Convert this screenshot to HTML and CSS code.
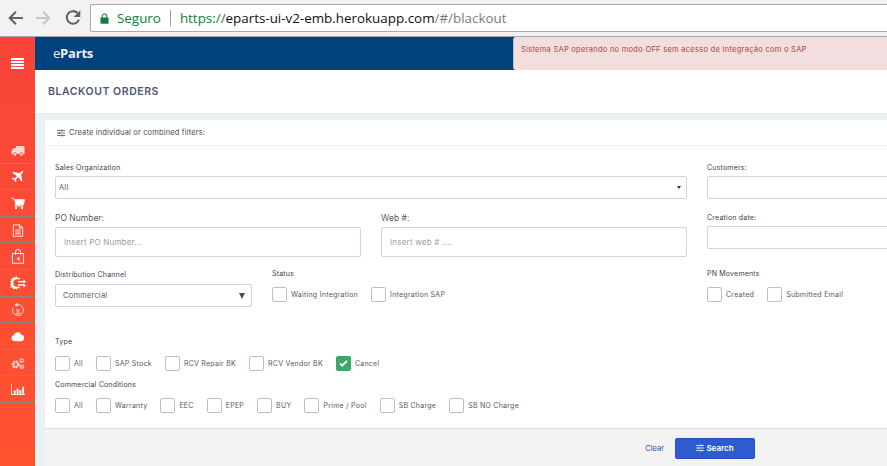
FILE: index.html
```html
<!DOCTYPE html>
<html lang="en">
	<head>
		<meta charset="UTF-8" />
		<meta name="viewport" content="width=device-width, initial-scale=1.0" />
		<title>Blackout Orders</title>
		<link rel="stylesheet" href="styles.css">
	</head>
	<body>
		<div class="browser-bar">
			<svg class="nav-icon" viewBox="0 0 16 16"><path d="M15 8H3.500M8.800 2.500L3.300 8l5.500 5.500" fill="none" stroke="#5f6368" stroke-width="1.800"/></svg>
			<svg class="nav-icon" viewBox="0 0 16 16"><path d="M1 8h11.500M7.200 2.500L12.700 8l-5.500 5.500" fill="none" stroke="#c4c6c9" stroke-width="1.800"/></svg>
			<svg class="nav-icon" viewBox="0 0 16 16"><path d="M13.300 9.500A5.600 5.600 0 1 1 12 3.500" fill="none" stroke="#5f6368" stroke-width="1.800"/><path d="M14.500 1v6h-6z" fill="#5f6368"/></svg>
			<div class="url-box">
				<svg class="lock" viewBox="0 0 10 12"><path d="M2.500 5V3.500a2.500 2.500 0 0 1 5 0V5" fill="none" stroke="#0b8043" stroke-width="1.200"/><rect x="0.500" y="4.800" width="9" height="7" fill="#0b8043"/></svg>
				<span class="secure">Seguro</span>
				<span class="url-sep"></span>
				<span class="url"><span class="url-https">https://</span>eparts-ui-v2-emb.herokuapp.com<span class="url-path">/#/blackout</span></span>
			</div>
		</div>

		<div class="app">
			<nav class="sidebar">
				<div class="menu-toggle">
					<svg viewBox="0 0 13 11"><path d="M0 0h13v2H0zM0 3h13v2H0zM0 6h13v2H0zM0 9h13v2H0z" fill="#fff"/></svg>
				</div>
				<div class="side-item"><svg viewBox="0 0 14 12"><path d="M5 1.500h8.500v8H12a1.700 1.700 0 0 0-3.400 0H5.600a1.700 1.700 0 0 0-3.400 0H.5V6L3 3.500h2z" fill="#f7dcd6"/><circle cx="3.900" cy="10" r="1.300" fill="#f7dcd6"/><circle cx="10.300" cy="10" r="1.300" fill="#f7dcd6"/></svg></div>
				<div class="side-item"><svg viewBox="0 0 14 12"><path d="M13 .6c-.8-.6-2-.2-2.800.6L8.600 2.800 2.500 1.300 1.300 2.500l4.800 2.900L3.800 7.700 1.800 7.300l-1 1 2.400 1.300 1.300 2.200 1-1-.4-2 2.300-2.300 2.800 4.600 1.200-1.200-1.400-6 1.500-1.500c.7-.8 1-1.800.5-2.400z" fill="#fff"/></svg></div>
				<div class="side-item"><svg viewBox="0 0 14 12"><path d="M.5.800h2.200l.5 1.500h10.300l-1.200 5H4.500L3.900 8.500h8.400" fill="none" stroke="#fff" stroke-width="1"/><path d="M3.300 2.300h10.200l-1.200 5H4.500z" fill="#fff"/><circle cx="5" cy="10.500" r="1.200" fill="#fff"/><circle cx="11" cy="10.500" r="1.200" fill="#fff"/></svg></div>
				<div class="side-item"><svg viewBox="0 0 12 14"><path d="M1 .8h6.500l3.500 3.500v8.900H1z" fill="none" stroke="#fbe3de" stroke-width="1.100"/><path d="M7.500 1v3.300H11M3 6.500h6M3 8.500h6M3 10.500h6" fill="none" stroke="#fbe3de" stroke-width="1.100"/></svg></div>
				<div class="side-item side-tall"><svg viewBox="0 0 13 15"><path d="M1 4.500h11v9.700H1z" fill="none" stroke="#fbe3de" stroke-width="1.100"/><path d="M4 6V3a2.500 2.500 0 0 1 5 0v3" fill="none" stroke="#fbe3de" stroke-width="1.100"/><path d="M8 7.500L5 9.700l3 2.200z" fill="#fbe3de"/></svg></div>
				<div class="side-item side-wide"><svg viewBox="0 0 16 14"><path d="M6.500 0l1 1.900 1.900-.5.400 1.900H7a3.700 3.700 0 1 0 0 7.400h2.700l-.3 1.700-1.900-.5-1 1.900-1.500-1.400-1.700 1-.6-2-2.100.1.400-2L0 8.600l1.400-1.600L0 5.400l1.500-.9-.4-2 2.100.1.600-2 1.700 1z" fill="#fff"/><path d="M8 5h5.500V3.500L16 5.700l-2.500 1.900V6.300H8zM8 8.200h5.500V7.500L16 9.400l-2.500 2v-1.600H8z" fill="#fff"/></svg></div>
				<div class="side-item side-tall"><svg viewBox="0 0 14 16"><path d="M4 3.600A5.800 5.800 0 1 1 1.700 6.200" fill="none" stroke="#fbe3de" stroke-width="1"/><path d="M6.500.8v4.400L3.300 3z" fill="#fbe3de"/><text x="7" y="12.500" class="dollar">$</text></svg></div>
				<div class="side-item"><svg viewBox="0 0 15 10"><path d="M3.500 10a3.200 3.200 0 0 1-.6-6.300A4.500 4.500 0 0 1 11.300 3a3.600 3.600 0 0 1 .2 7z" fill="#fff"/></svg></div>
				<div class="side-item"><svg viewBox="0 0 15 13"><circle cx="5" cy="7.500" r="2.800" fill="none" stroke="#f7dcd6" stroke-width="2.800" stroke-dasharray="2 .6"/><circle cx="11.700" cy="3.300" r="1.700" fill="none" stroke="#f7dcd6" stroke-width="1.800" stroke-dasharray="1.200 .4"/><circle cx="11.700" cy="10" r="1.700" fill="none" stroke="#f7dcd6" stroke-width="1.800" stroke-dasharray="1.200 .4"/></svg></div>
				<div class="side-item"><svg viewBox="0 0 15 12"><path d="M.5 0v11.300H15" fill="none" stroke="#fff" stroke-width="1"/><path d="M3 7h2v3.500H3zM6 5h2v5.500H6zM9 6.500h2v4H9zM12 3h2v7.500h-2z" fill="#fff"/></svg></div>
			</nav>

			<main class="content">
				<header class="topbar">
					<div class="brand"><span class="brand-e">e</span>Parts</div>
					<div class="alert">Sistema SAP operando no modo OFF sem acesso de Integração com o SAP</div>
				</header>
				<div class="page-title">BLACKOUT ORDERS</div>

				<section class="card">
					<div class="card-head">
						<svg class="sliders" viewBox="0 0 8 8"><path d="M0 1.500h8M0 4h8M0 6.500h8" stroke="#444" stroke-width=".7"/><path d="M5 .5v2M2.500 3v2M5 5.500v2" stroke="#444" stroke-width=".9"/></svg>
						Create individual or combined filters:
					</div>

					<div class="card-body">
						<div class="row row-sales">
							<div class="col-main">
								<label class="field-label">Sales Organization</label>
								<div class="select-box"><span>All</span><span class="caret"></span></div>
							</div>
							<div class="col-side">
								<label class="field-label">Customers:</label>
								<div class="text-box"></div>
							</div>
						</div>

						<div class="row row-po">
							<div class="col-main two-up">
								<div class="half">
									<label class="field-label big">PO Number:</label>
									<div class="text-box tall">Insert PO Number...</div>
								</div>
								<div class="half">
									<label class="field-label big">Web #:</label>
									<div class="text-box tall">Insert web # ....</div>
								</div>
							</div>
							<div class="col-side">
								<label class="field-label">Creation date:</label>
								<div class="text-box"></div>
							</div>
						</div>

						<div class="row row-channel">
							<div class="col-main two-up">
								<div class="channel">
									<label class="field-label channel-label">Distribution Channel</label>
									<div class="select-box channel-select"><span>Commercial</span><span class="triangle"></span></div>
								</div>
								<div class="status">
									<label class="field-label">Status</label>
									<div class="checks checks-status">
										<label class="check"><span class="box"></span>Waiting Integration</label>
										<label class="check"><span class="box"></span>Integration SAP</label>
									</div>
								</div>
							</div>
							<div class="col-side">
								<label class="field-label">PN Movements</label>
								<div class="checks checks-status">
									<label class="check"><span class="box"></span>Created</label>
									<label class="check"><span class="box"></span>Submitted Email</label>
								</div>
							</div>
						</div>

						<div class="group group-type">
							<label class="field-label">Type</label>
							<div class="checks">
								<label class="check"><span class="box"></span>All</label>
								<label class="check"><span class="box"></span>SAP Stock</label>
								<label class="check"><span class="box"></span>RCV Repair BK</label>
								<label class="check"><span class="box"></span>RCV Vendor BK</label>
								<label class="check"><span class="box checked"><svg viewBox="0 0 10 8"><path d="M1 4l2.500 2.500L9 1" fill="none" stroke="#fff" stroke-width="2"/></svg></span>Cancel</label>
							</div>
						</div>

						<div class="group group-conditions">
							<label class="field-label">Commercial Conditions</label>
							<div class="checks">
								<label class="check"><span class="box"></span>All</label>
								<label class="check"><span class="box"></span>Warranty</label>
								<label class="check"><span class="box"></span>EEC</label>
								<label class="check"><span class="box"></span>EPEP</label>
								<label class="check"><span class="box"></span>BUY</label>
								<label class="check"><span class="box"></span>Prime / Pool</label>
								<label class="check"><span class="box"></span>SB Charge</label>
								<label class="check"><span class="box"></span>SB NO Charge</label>
							</div>
						</div>
					</div>

					<div class="card-foot">
						<a class="clear-link">Clear</a>
						<button class="search-btn">
							<svg class="sliders" viewBox="0 0 8 8"><path d="M0 1.500h8M0 4h8M0 6.500h8" stroke="#fff" stroke-width=".7"/><path d="M5 .5v2M2.500 3v2M5 5.500v2" stroke="#fff" stroke-width=".9"/></svg>
							Search
						</button>
					</div>
				</section>
			</main>
		</div>
	</body>
</html>
```

FILE: styles.css
```css
html, body {
	height: 100%;
}
body {
	margin: 0;
	overflow: hidden;
	font-family: Inter, "Liberation Sans", sans-serif;
	color: #3f4047;
	background-color: #ebf0f5;
}

/* browser chrome */
.browser-bar {
	height: 36px;
	display: flex;
	align-items: center;
	padding-left: 6px;
	background-color: #f2f2f2;
	border-bottom: 1px solid #a9a9a9;
}
.nav-icon {
	width: 18px;
	height: 18px;
	margin-right: 11px;
	flex: none;
}
.url-box {
	flex: 1;
	height: 28px;
	box-sizing: border-box;
	margin-left: -3px;
	display: flex;
	align-items: center;
	padding-left: 9px;
	background-color: white;
	border: 1px solid #a9a9a9;
	border-right: none;
	border-radius: 2px 0 0 2px;
	font-family: "Open Sans", sans-serif;
	font-size: 13.400px;
	white-space: nowrap;
}
.lock {
	width: 9px;
	height: 11px;
	margin-right: 8px;
}
.secure {
	color: #0b8043;
}
.url-sep {
	width: 1px;
	height: 16px;
	margin: 0 9px 0 9px;
	background-color: #9e9e9e;
}
.url {
	color: #111;
}
.url-https {
	color: #0b8043;
}
.url-path {
	color: #7b7b7b;
}

/* layout */
.app {
	display: flex;
	height: 429px;
}
.sidebar {
	width: 35px;
	flex: none;
	background: linear-gradient(#f94438, #ff532f);
}
.menu-toggle {
	height: 100px;
	display: flex;
	justify-content: center;
	padding-top: 21px;
	box-sizing: border-box;
}
.menu-toggle svg {
	width: 13px;
	height: 11px;
}
.side-item {
	height: 26.600px;
	box-sizing: border-box;
	display: flex;
	align-items: center;
	justify-content: center;
	padding-top: 1px;
	border-bottom: 1px solid #8c8785;
}
.side-item svg {
	width: 14px;
	height: 13px;
}
.side-tall svg {
	height: 15px;
}
.side-wide svg {
	width: 16px;
	height: 14px;
}
.dollar {
	font-size: 8px;
	font-family: "Liberation Sans", sans-serif;
	fill: #fbe3de;
	text-anchor: middle;
}
.content {
	flex: 1;
	min-width: 0;
	overflow: hidden;
}

/* header */
.topbar {
	height: 33px;
	display: flex;
	background-color: #00417e;
}
.brand {
	width: 478px;
	padding-left: 18px;
	box-sizing: border-box;
	line-height: 33px;
	color: #eaf0f6;
	font-family: "Open Sans", sans-serif;
	font-size: 13px;
	font-weight: 700;
	letter-spacing: -.2px;
}
.brand-e {
	font-weight: 400;
}
.alert {
	flex: 1;
	padding: 8px 7px 0 7px;
	background-color: #f2dede;
	border-left: 1px solid #b9c4cf;
	border-radius: 3px 0 0 3px;
	color: #a94442;
	font-size: 7.500px;
	line-height: 10px;
	letter-spacing: .27px;
	white-space: nowrap;
}
.page-title {
	height: 44px;
	padding-left: 13px;
	line-height: 43px;
	background-color: white;
	border-bottom: 1px solid #e3e8ee;
	box-sizing: border-box;
	color: #4f5670;
	font-size: 10.500px;
	font-weight: 600;
	letter-spacing: .55px;
}

/* filter card */
.card {
	margin: 6px 0 0 10px;
	background-color: white;
}
.card-head {
	height: 25px;
	display: flex;
	align-items: center;
	gap: 4px;
	padding-left: 12px;
	border-bottom: 1px solid #f0f0f2;
	font-size: 7.500px;
	letter-spacing: .15px;
	color: #4a4a4f;
}
.sliders {
	width: 8px;
	height: 8px;
	flex: none;
}
.card-body {
	padding: 17px 0 15px 10px;
}
.row {
	display: flex;
}
.row-po {
	margin-top: 14px;
}
.row-channel {
	margin-top: 12px;
}
.col-main {
	width: 632px;
	flex: none;
}
.col-side {
	margin-left: 20px;
	width: 200px;
	flex: none;
}
.two-up {
	display: flex;
	gap: 20px;
}
.half {
	flex: 1;
}
.channel {
	width: 197px;
	flex: none;
}
.status {
	flex: 1;
}
.field-label {
	display: block;
	height: 10px;
	line-height: 10px;
	margin-bottom: 3px;
	font-size: 7px;
	letter-spacing: .2px;
}
.field-label.big {
	margin-bottom: 4px;
	font-size: 8.500px;
	letter-spacing: 0;
	color: #55585f;
}
.channel-label {
	margin-top: 1px;
	margin-bottom: 4px;
}
.select-box,
.text-box {
	height: 23px;
	box-sizing: border-box;
	display: flex;
	align-items: center;
	background-color: white;
	border: 1px solid #cdd5e2;
	border-radius: 2px;
	font-size: 7.500px;
	letter-spacing: .2px;
}
.select-box {
	justify-content: space-between;
	padding: 0 5px 0 3px;
	color: #55585f;
}
.caret {
	width: 0;
	height: 0;
	border-left: 2.500px solid transparent;
	border-right: 2.500px solid transparent;
	border-top: 3px solid #333;
}
.text-box.tall {
	height: 30px;
	padding-left: 8px;
	color: #9b9ba1;
	font-size: 8px;
}
.channel-select {
	padding: 0 6px 0 7px;
}
.triangle {
	width: 0;
	height: 0;
	border-left: 3px solid transparent;
	border-right: 3px solid transparent;
	border-top: 6px solid #44505f;
}

/* check boxes */
.checks {
	display: flex;
	align-items: center;
	gap: 13px;
}
.checks-status {
	margin-top: 8px;
}
.check {
	display: flex;
	align-items: center;
	gap: 4px;
	font-size: 7px;
	letter-spacing: .26px;
	color: #55585f;
	white-space: nowrap;
}
.box {
	width: 15px;
	height: 15px;
	box-sizing: border-box;
	display: flex;
	align-items: center;
	justify-content: center;
	border: 1px solid #b5c0d0;
	border-radius: 2px;
	flex: none;
}
.box.checked {
	background-color: #3ea768;
	border-color: #3ea768;
}
.box.checked svg {
	width: 9px;
	height: 7px;
}
.group-type {
	margin-top: 30px;
}
.group-type .field-label {
	margin-bottom: 9px;
}
.group-conditions {
	margin-top: 9px;
}
.group-conditions .field-label {
	margin-bottom: 8px;
}

/* footer */
.card-foot {
	height: 38px;
	display: flex;
	align-items: center;
	justify-content: flex-end;
	gap: 11px;
	padding-right: 132px;
	background-color: #f3f3f3;
	border-top: 1px solid #d8dae5;
	border-bottom: 1px solid #e6e6e6;
}
.clear-link {
	color: #2e55a8;
	font-size: 7.500px;
}
.search-btn {
	width: 80px;
	height: 21px;
	display: flex;
	align-items: center;
	justify-content: center;
	gap: 2px;
	padding: 0;
	background-color: #2d5bd0;
	border: 1px solid #2650bd;
	border-radius: 2px;
	color: white;
	font-family: Inter, sans-serif;
	font-size: 8px;
	font-weight: 600;
}
```
